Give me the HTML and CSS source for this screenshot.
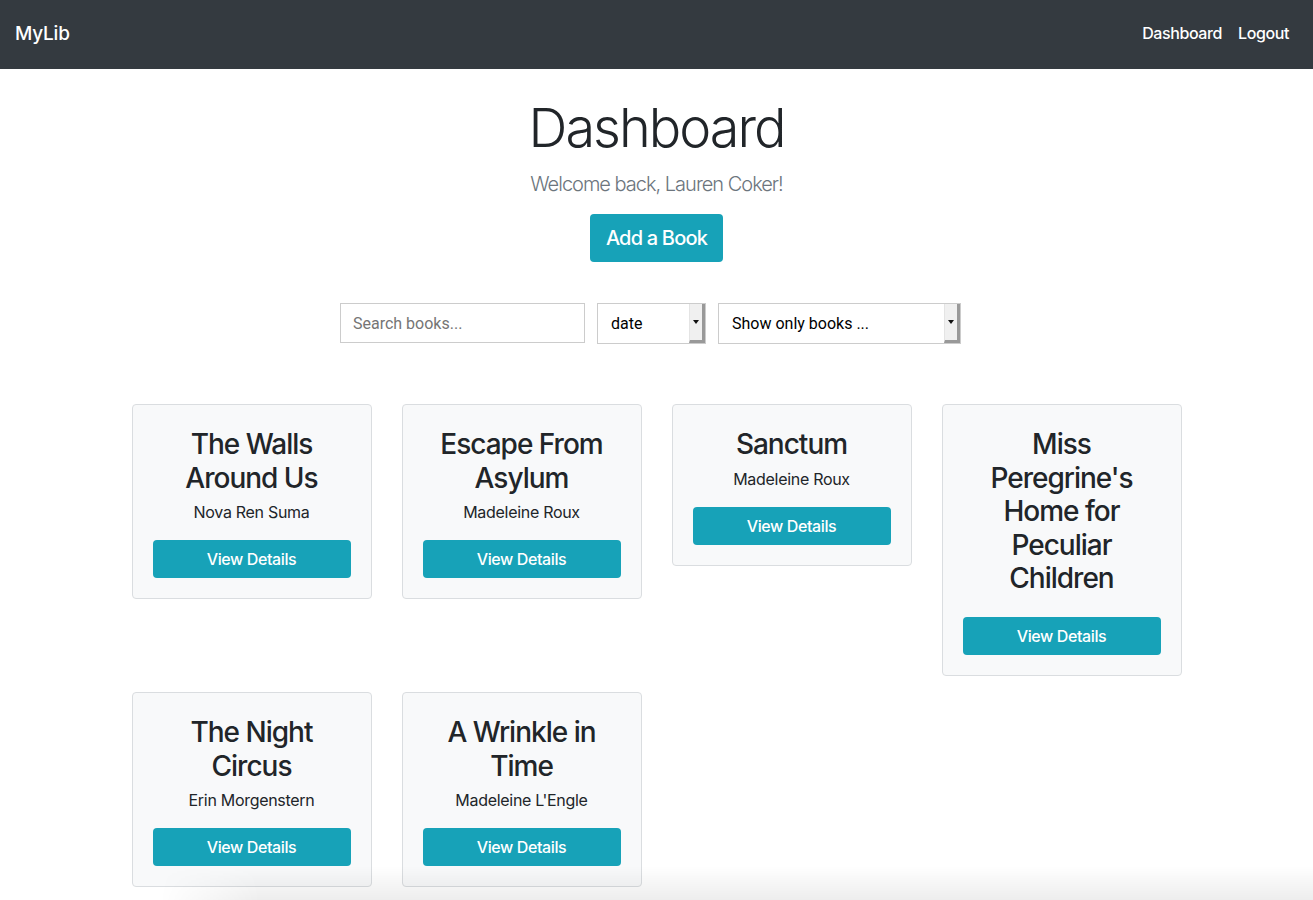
FILE: index.html
```html
<!DOCTYPE html>
<html lang="en">
<head>
<meta charset="utf-8">
<title>MyLib</title>
<link rel="stylesheet" href="styles.css">
</head>
<body>
<nav class="navbar">
  <a class="brand" href="#">MyLib</a>
  <div class="nav-links">
    <a class="nav-link" href="#">Dashboard</a>
    <a class="nav-link" href="#">Logout</a>
  </div>
</nav>
<main class="main">
  <header class="hero">
    <h1 class="title">Dashboard</h1>
    <p class="lead">Welcome back, Lauren Coker!</p>
    <a class="btn btn-lg" href="#">Add a Book</a>
  </header>
  <div class="filters">
    <input class="search" type="text" placeholder="Search books...">
    <div class="select sort">
      <span class="select-text">date</span>
      <span class="arrow"></span>
    </div>
    <div class="select show">
      <span class="select-text">Show only books ...</span>
      <span class="arrow"></span>
    </div>
  </div>
  <section class="cards">
    <div class="card">
      <h3 class="card-title">The Walls Around Us</h3>
      <p class="author">Nova Ren Suma</p>
      <a class="btn btn-block" href="#">View Details</a>
    </div>
    <div class="card">
      <h3 class="card-title">Escape From Asylum</h3>
      <p class="author">Madeleine Roux</p>
      <a class="btn btn-block" href="#">View Details</a>
    </div>
    <div class="card">
      <h3 class="card-title">Sanctum</h3>
      <p class="author">Madeleine Roux</p>
      <a class="btn btn-block" href="#">View Details</a>
    </div>
    <div class="card">
      <h3 class="card-title">Miss Peregrine's Home for Peculiar Children</h3>
      <a class="btn btn-block" href="#">View Details</a>
    </div>
    <div class="card">
      <h3 class="card-title">The Night Circus</h3>
      <p class="author">Erin Morgenstern</p>
      <a class="btn btn-block" href="#">View Details</a>
    </div>
    <div class="card">
      <h3 class="card-title">A Wrinkle in Time</h3>
      <p class="author">Madeleine L'Engle</p>
      <a class="btn btn-block" href="#">View Details</a>
    </div>
  </section>
</main>
<div class="bottom-shade"></div>
</body>
</html>
```
FILE: styles.css
```css
* { box-sizing: border-box; }
html, body { margin: 0; padding: 0; }
body {
  font-family: Inter, "Liberation Sans", sans-serif;
  font-size: 16px;
  line-height: 1.5;
  color: #212529;
  background: #fff;
}
a { text-decoration: none; }

.navbar {
  background: #343a40;
  height: 69px;
  display: flex;
  align-items: center;
  justify-content: space-between;
  padding: 0 16px 0 15px;
}
.brand {
  color: #fff;
  font-size: 19px;
  font-weight: 500;
  letter-spacing: -0.2px;
}
.nav-links { display: flex; padding-bottom: 3px; }
.nav-link {
  color: #fff;
  font-size: 16px;
  font-weight: 500;
  padding: 0 8px;
  letter-spacing: -0.4px;
}

.main { padding-bottom: 40px; }
.hero {
  display: flex;
  flex-direction: column;
  align-items: center;
  padding-top: 25px;
}
.title {
  font-size: 54px;
  font-weight: 300;
  line-height: 67px;
  margin: 0 0 8px;
  letter-spacing: -2px;
}
.lead {
  font-size: 20px;
  font-weight: 300;
  color: #6c757d;
  margin: 0 0 15px;
  line-height: 30px;
  letter-spacing: -1px;
}
.btn {
  display: block;
  background: #17a2b8;
  color: #fff;
  border-radius: 4px;
  text-align: center;
  font-weight: 500;
}
.btn-lg {
  font-size: 20px;
  line-height: 30px;
  padding: 9px 16px;
  border-radius: 4px;
  letter-spacing: -0.8px;
}

.filters {
  display: flex;
  justify-content: center;
  gap: 12px;
  margin-top: 41px;
  padding-right: 12px;
}
.search {
  width: 245px;
  height: 40px;
  border: 1px solid #ccc;
  padding: 0 12px;
  font-family: Roboto, "Liberation Sans", sans-serif;
  font-size: 16px;
  color: #222;
  outline: none;
}
.search::placeholder { color: #757575; }
.select {
  position: relative;
  height: 41px;
  border: 1px solid #ccc;
  background: #fff;
  font-family: Roboto, "Liberation Sans", sans-serif;
  font-size: 16px;
  color: #000;
  display: flex;
  align-items: center;
  padding-left: 13px;
}
.sort { width: 109px; }
.show { width: 243px; }
.arrow {
  position: absolute;
  top: 0;
  right: 0;
  bottom: 0;
  width: 16px;
  background: #f0f0f0;
  border-right: 3px solid #999;
  border-bottom: 3px solid #999;
  border-left: 1px solid #e4e4e4;
}
.arrow::after {
  content: "";
  position: absolute;
  left: 3px;
  top: 16px;
  border-left: 3px solid transparent;
  border-right: 3px solid transparent;
  border-top: 4px solid #111;
}

.cards {
  width: 1050px;
  margin: 60px auto 0;
  display: flex;
  flex-wrap: wrap;
  align-items: flex-start;
  column-gap: 30px;
  row-gap: 16px;
}
.card {
  width: 240px;
  background: #f8f9fa;
  border: 1px solid #dadde0;
  border-radius: 4px;
  padding: 20px;
  text-align: center;
}
.card-title {
  font-size: 28px;
  font-weight: 500;
  line-height: 1.2;
  margin: 0 0 5px;
  padding-top: 3px;
  letter-spacing: -1px;
}
.author {
  margin: 0 0 16px;
  font-size: 16px;
  letter-spacing: -0.3px;
}
.card-title + .btn { margin-top: 21px; }
.btn-block {
  font-size: 16px;
  line-height: 24px;
  padding: 7px 12px;
  letter-spacing: -0.4px;
}

.bottom-shade {
  position: fixed;
  left: 0;
  right: 0;
  bottom: 0;
  height: 34px;
  pointer-events: none;
  background: linear-gradient(to bottom, rgba(0,0,0,0), rgba(0,0,0,0.07));
  -webkit-mask-image: linear-gradient(to right, transparent 160px, #000 260px);
  mask-image: linear-gradient(to right, transparent 160px, #000 260px);
}
```
